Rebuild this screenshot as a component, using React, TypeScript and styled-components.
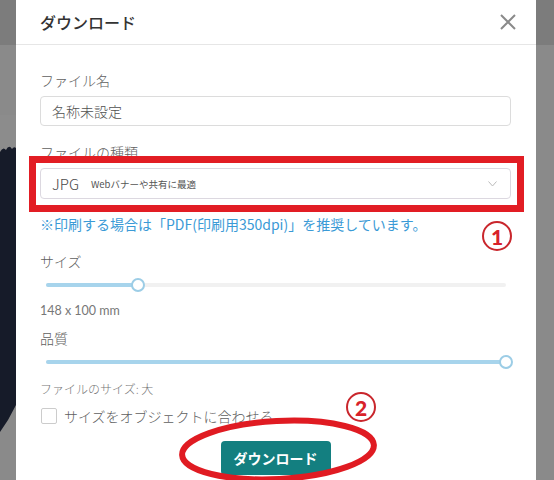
import React, { FunctionComponent } from 'react';
import styled, { createGlobalStyle } from 'styled-components';

const GlobalStyle = createGlobalStyle`
  html, body {
    margin: 0;
    padding: 0;
    background: #888888;
  }
  body {
    font-family: "Noto Sans CJK JP", "Noto Sans", sans-serif;
  }
`;

const Screen = styled.div`
  display: flex;
  width: 554px;
  height: 480px;
  overflow: hidden;
`;

const SideStrip = styled.div<{ $width: number }>`
  flex: 0 0 ${(p) => p.$width}px;
  height: 480px;
  background: linear-gradient(#7c7c7c 0 45px, #8a8a8a 45px);
`;

const Modal = styled.div`
  position: relative;
  flex: 0 0 520px;
  height: 480px;
  background: #ffffff;
  display: flex;
  flex-direction: column;
`;

const Header = styled.div`
  display: flex;
  align-items: center;
  justify-content: space-between;
  height: 44px;
  padding: 0 20px 0 24px;
  border-bottom: 1px solid #e6e6e6;
`;

const Title = styled.div`
  font-size: 16px;
  font-weight: 500;
  color: #333333;
  line-height: 20px;
`;

const CloseButton = styled.div`
  display: flex;
  width: 16px;
  height: 16px;
`;

const Body = styled.div`
  display: flex;
  flex-direction: column;
  padding: 25px 25px 0 24px;
`;

const Label = styled.div<{ $gap?: number }>`
  font-size: 14px;
  font-weight: 300;
  line-height: 20px;
  color: #606060;
  margin-top: ${(p) => p.$gap ?? 0}px;
  margin-bottom: 6px;
`;

const TextInput = styled.div`
  height: 30px;
  box-sizing: border-box;
  border: 1px solid #dcdcdc;
  border-radius: 4px;
  padding: 0 11px;
  display: flex;
  align-items: center;
  font-size: 14px;
  font-weight: 300;
  color: #505050;
`;

const SelectWrap = styled.div`
  position: relative;
`;

const SelectBox = styled.div`
  height: 31px;
  box-sizing: border-box;
  border: 1px solid #dcd8e0;
  border-radius: 4px;
  padding: 0 13px 0 11px;
  display: flex;
  align-items: center;
  gap: 12px;
`;

const FormatName = styled.span`
  font-family: "Noto Sans CJK JP", "Noto Sans", sans-serif;
  font-size: 15px;
  font-weight: 300;
  color: #4a4a4a;
`;

const FormatHint = styled.span`
  flex: 1;
  font-size: 9.5px;
  color: #555555;
`;

const RedFrame = styled.div`
  position: absolute;
  top: -12px;
  left: -11px;
  right: -13px;
  bottom: -13px;
  border: 7px solid #e21d24;
  pointer-events: none;
`;

const Note = styled.div`
  margin-top: 15px;
  font-size: 14px;
  line-height: 20px;
  color: #3a9ad6;
`;

const SliderRow = styled.div`
  position: relative;
  height: 16px;
  margin: 0 5px 0 6px;
  display: flex;
  align-items: center;
`;

const Track = styled.div`
  position: relative;
  flex: 1;
  height: 4px;
  border-radius: 2px;
  background: #f1f1f1;
`;

const Fill = styled.div`
  height: 4px;
  border-radius: 2px;
  background: #a7d4ec;
`;

const Thumb = styled.div`
  position: absolute;
  top: 50%;
  width: 14px;
  height: 14px;
  box-sizing: border-box;
  border: 2px solid #9ccde6;
  border-radius: 50%;
  background: #ffffff;
  transform: translate(-50%, -50%);
`;

const Caption = styled.div<{ $latin?: boolean }>`
  font-family: ${(p) =>
    p.$latin ? '"Lato", "Noto Sans CJK JP", sans-serif' : '"Noto Sans CJK JP", sans-serif'};
  font-size: ${(p) => (p.$latin ? 12.5 : 12)}px;
  font-weight: ${(p) => (p.$latin ? 400 : 300)};
  line-height: 18px;
  color: #777777;
`;

const CheckRow = styled.label`
  display: flex;
  align-items: center;
  gap: 7px;
  margin-top: 9px;
  height: 18px;
`;

const CheckBox = styled.span`
  width: 16px;
  height: 16px;
  box-sizing: border-box;
  border: 1px solid #cccccc;
  border-radius: 2px;
  margin-left: 1px;
`;

const CheckText = styled.span`
  font-size: 14px;
  font-weight: 300;
  color: #606060;
`;

const DownloadButton = styled.button`
  align-self: center;
  margin-top: 16px;
  height: 34px;
  padding: 0 13px;
  border: none;
  border-radius: 4px;
  background: #137f80;
  color: #ffffff;
  font-family: "Noto Sans CJK JP", sans-serif;
  font-size: 14px;
  font-weight: 700;
`;

const Marker = styled.div<{ $x: number; $y: number }>`
  position: absolute;
  left: ${(p) => p.$x}px;
  top: ${(p) => p.$y}px;
  width: 30px;
  height: 30px;
  box-sizing: border-box;
  border: 2px solid #c9262c;
  border-radius: 50%;
  display: flex;
  align-items: center;
  justify-content: center;
  font-family: "Lato", "Noto Sans", sans-serif;
  font-size: 21px;
  font-weight: 900;
  color: #d8222a;
`;

const Ellipse = styled.svg`
  position: absolute;
  left: 158px;
  top: 413px;
`;

interface SliderProps {
  value: number;
}

const Slider: FunctionComponent<SliderProps> = ({ value }) => (
  <SliderRow>
    <Track>
      <Fill style={{ width: `${value * 100}%` }} />
      <Thumb style={{ left: `${value * 100}%` }} />
    </Track>
  </SliderRow>
);

const BackCanvas = () => (
  <svg width="16" height="480" viewBox="0 0 16 480">
    <rect x="0" y="115" width="16" height="35" fill="#8c8c8c" />
    <path
      d="M0 152 Q3 146 6 150 Q9 144 12 149 Q14 146 16 148 L16 405 L8 420 L0 432 Z"
      fill="#161b29"
    />
  </svg>
);

export default function App() {
  return (
    <>
      <GlobalStyle />
      <Screen>
        <SideStrip $width={16}>
          <BackCanvas />
        </SideStrip>
        <Modal>
          <Header>
            <Title>ダウンロード</Title>
            <CloseButton>
              <svg width="16" height="16" viewBox="0 0 16 16">
                <path d="M1 1 L15 15 M15 1 L1 15" stroke="#8a8a8a" strokeWidth="2" />
              </svg>
            </CloseButton>
          </Header>
          <Body>
            <Label>ファイル名</Label>
            <TextInput>名称未設定</TextInput>
            <Label $gap={16}>ファイルの種類</Label>
            <SelectWrap>
              <SelectBox>
                <FormatName>JPG</FormatName>
                <FormatHint>Webバナーや共有に最適</FormatHint>
                <svg width="9" height="6" viewBox="0 0 9 6">
                  <path d="M0.5 0.5 L4.5 5 L8.5 0.5" stroke="#bbbbbb" strokeWidth="1" fill="none" />
                </svg>
              </SelectBox>
              <RedFrame />
            </SelectWrap>
            <Note>※印刷する場合は「PDF(印刷用350dpi)」を推奨しています。</Note>
            <Label $gap={17}>サイズ</Label>
            <Slider value={0.2} />
            <Caption $latin style={{ marginTop: 9 }}>148 x 100 mm</Caption>
            <Label $gap={8}>品質</Label>
            <Slider value={1} />
            <Caption style={{ marginTop: 10 }}>ファイルのサイズ: 大</Caption>
            <CheckRow>
              <CheckBox />
              <CheckText>サイズをオブジェクトに合わせる</CheckText>
            </CheckRow>
            <DownloadButton>ダウンロード</DownloadButton>
          </Body>
          <Marker $x={466} $y={221}>1</Marker>
          <Marker $x={330} $y={392}>2</Marker>
          <Ellipse width="210" height="72" viewBox="0 0 210 72">
            <ellipse
              cx="104"
              cy="37"
              rx="96"
              ry="29"
              fill="none"
              stroke="#e01b22"
              strokeWidth="6"
              transform="rotate(-3 104 37)"
            />
          </Ellipse>
        </Modal>
        <SideStrip $width={18} />
      </Screen>
    </>
  );
}
